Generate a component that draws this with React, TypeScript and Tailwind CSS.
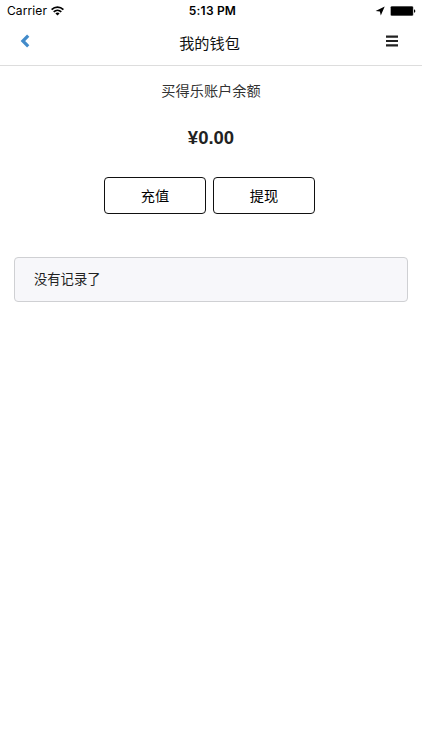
type ActionButtonProps = {
  label: string;
};

const StatusBar = () => {
  return (
    <div className="grid h-[22px] grid-cols-3 items-center pl-[7px] pr-[6px] text-black">
      {/* CARRIER */}
      <div className="flex items-center gap-[4px]">
        <span className="text-[12px] leading-[22px] tracking-[0.1px]">Carrier</span>
        <svg width="13" height="10" viewBox="0 0 13 10" aria-hidden="true">
          <path
            d="M0.6 3.6C4 0.2 9 0.2 12.4 3.6M2.7 5.8C4.9 3.7 8.1 3.7 10.3 5.8"
            fill="none"
            stroke="currentColor"
            strokeWidth="1.7"
          />
          <path d="M4.4 7.4C5.6 6.3 7.4 6.3 8.6 7.4L6.5 9.6Z" fill="currentColor" />
        </svg>
      </div>
      {/* TIME */}
      <span className="pl-[2px] text-center text-[12px] font-semibold leading-[22px] tracking-[0.2px]">
        5:13 PM
      </span>
      {/* LOCATION & BATTERY */}
      <div className="flex items-center justify-end gap-[5px]">
        <svg width="10" height="10" viewBox="0 0 10 10" aria-hidden="true">
          <path d="M9.7 0.5L5.8 9.6L4.9 5.5L0.6 4.9Z" fill="currentColor" />
        </svg>
        <svg width="26" height="10" viewBox="0 0 26 10" aria-hidden="true">
          <rect x="0.3" y="0" width="23.2" height="10" rx="1.6" fill="#a3a3a3" />
          <rect x="0.9" y="0.5" width="22" height="9" rx="0.8" fill="currentColor" />
          <path d="M24 3.2C25.8 3.6 25.8 6.4 24 6.8Z" fill="currentColor" />
        </svg>
      </div>
    </div>
  );
};

const Header = () => {
  return (
    <header className="grid h-11 grid-cols-3 items-center border-b border-[#dddddd] pl-5 pr-6">
      <button aria-label="Back" className="w-fit">
        <svg width="10" height="14" viewBox="0 0 10 14" className="mb-[5px] text-[#428bca]">
          <path d="M8.2 1.7L2.9 7L8.2 12.3" fill="none" stroke="currentColor" strokeWidth="3.2" />
        </svg>
      </button>
      <h1 className="pl-px pt-px text-center text-[15.2px] text-[#111111]">我的钱包</h1>
      <button aria-label="Menu" className="w-fit justify-self-end">
        <svg width="12" height="12" viewBox="0 0 12 12" className="mb-[5px] text-[#222222]">
          <path d="M0 1.6H12M0 6H12M0 10.4H12" stroke="currentColor" strokeWidth="2.1" />
        </svg>
      </button>
    </header>
  );
};

const ActionButton = ({ label }: ActionButtonProps) => {
  return (
    <button className="h-[37px] w-[102px] rounded-[4px] border border-[#111111] bg-white text-[14.2px] text-black">
      {label}
    </button>
  );
};

const App = () => {
  return (
    <div className="min-h-screen bg-white font-['Inter','Noto_Sans_CJK_SC',sans-serif]">
      <StatusBar />
      <Header />
      <main className="px-[14px]">
        {/* BALANCE */}
        <p className="mt-[15px] text-center text-[14.2px] leading-5 text-[#333333]">
          买得乐账户余额
        </p>
        <p className="mt-[25px] text-center font-['Liberation_Sans',sans-serif] text-[18.5px] font-bold leading-6 text-[#222222]">
          ¥0.00
        </p>
        {/* ACTIONS */}
        <div className="mt-[27px] flex justify-center gap-[7px] pr-[3px]">
          <ActionButton label="充值" />
          <ActionButton label="提现" />
        </div>
        {/* RECORDS */}
        <div className="mt-[43px] flex h-[45px] items-center rounded-[4px] border border-[#cfd0d3] bg-[#f7f7fa] pl-[19px] pt-px text-[13.3px] text-[#222222]">
          没有记录了
        </div>
      </main>
    </div>
  );
};

export default App;
